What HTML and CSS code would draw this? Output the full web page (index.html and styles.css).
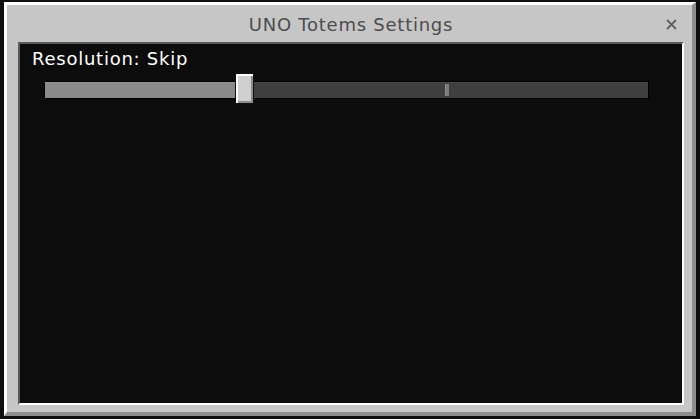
FILE: index.html
```html
<!DOCTYPE html>
<html>
<head>
<meta charset="utf-8">
<link rel="stylesheet" href="styles.css">
</head>
<body>
<div class="window">
  <div class="titlebar">
    <span></span>
    <span class="title">UNO Totems Settings</span>
    <span class="close">
      <svg width="11" height="11" viewBox="0 0 11 11"><path d="M1 1 L10 10 M10 1 L1 10" stroke="#626262" stroke-width="1.8" fill="none"/></svg>
    </span>
  </div>
  <div class="content">
    <div class="label">Resolution: Skip</div>
    <div class="slider">
      <div class="track">
        <div class="fill" style="width:190px"></div>
        <div class="rest"></div>
        <div class="tick"></div>
        <div class="thumb"></div>
      </div>
    </div>
  </div>
</div>
</body>
</html>
```
FILE: styles.css
```css
html, body {
  margin: 0;
  padding: 0;
  background: #0e0e0e;
  width: 700px;
  height: 419px;
  overflow: hidden;
  font-family: "DejaVu Sans", "Noto Sans", sans-serif;
}
.window {
  box-sizing: border-box;
  margin: 2px 4px 0 4px;
  width: 692px;
  height: 414px;
  background: #c6c6c6;
  border-top: 3px solid #ffffff;
  border-left: 3px solid #ffffff;
  border-right: 4px solid #8d8d8d;
  border-bottom: 4px solid #8d8d8d;
  padding: 0 8px 7px 11px;
  display: flex;
  flex-direction: column;
}
.titlebar {
  height: 37px;
  display: grid;
  grid-template-columns: 1fr auto 1fr;
  align-items: center;
}
.title {
  color: #4c4c4c;
  font-size: 18px;
  line-height: 20px;
  letter-spacing: 0.75px;
  padding-top: 2px;
}
.close {
  justify-self: end;
  margin-right: 7px;
  display: flex;
  padding-top: 2px;
}
.content {
  flex: 1;
  background: #0c0c0c;
  border-top: 2px solid #5a5a5a;
  border-left: 2px solid #5a5a5a;
  border-right: 2px solid #ffffff;
  border-bottom: 2px solid #ffffff;
  padding: 5px 12px 0 12px;
}
.label {
  color: #ffffff;
  font-size: 18px;
  line-height: 20px;
  letter-spacing: 0.75px;
}
.slider {
  margin-top: 4px;
  margin-left: 13px;
  width: 603px;
  height: 31px;
  display: flex;
  align-items: center;
}
.track {
  position: relative;
  width: 603px;
  height: 16px;
  margin-top: 3px;
  display: flex;
  outline: 1px solid #000;
}
.fill {
  height: 100%;
  background: #8a8a8a;
  border-top: 1px solid #959595;
  box-sizing: border-box;
}
.rest {
  flex: 1;
  height: 100%;
  background: #3f3f3f;
  border-top: 1px solid #474747;
  box-sizing: border-box;
}
.tick {
  position: absolute;
  left: 400px;
  top: 2px;
  width: 4px;
  height: 12px;
  background: #7c7c7c;
  box-shadow: inset 1px 0 0 #8f8f8f;
}
.thumb {
  position: absolute;
  left: 190px;
  top: -9px;
  width: 19px;
  height: 31px;
  box-sizing: border-box;
  background: #cfcfcf;
  border: 1px solid #111;
  box-shadow: inset 2px 2px 0 #ffffff, inset -2px -2px 0 #8c8c8c;
}
```
